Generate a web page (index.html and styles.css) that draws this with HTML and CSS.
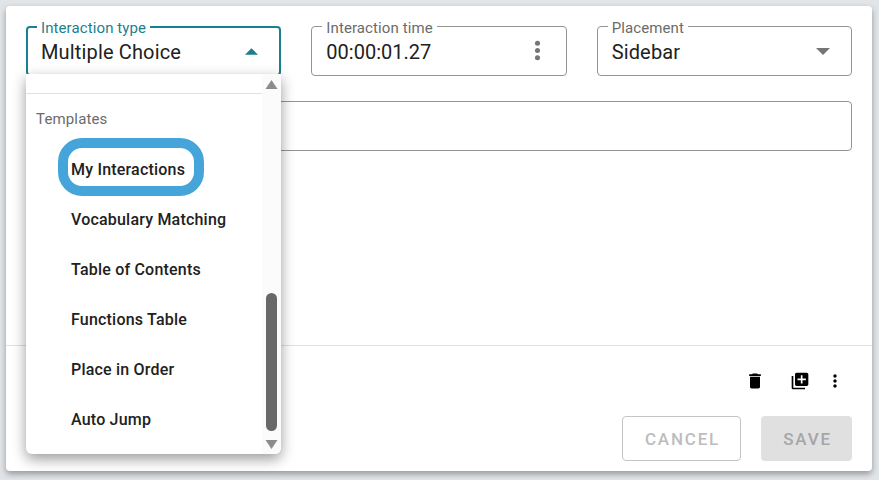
FILE: index.html
```html
<!DOCTYPE html>
<html lang="en">
<head>
<meta charset="utf-8">
<title>Interaction editor</title>
<link rel="stylesheet" href="styles.css">
</head>
<body>
<main class="card">
  <div class="form">
    <div class="row">
      <div class="field field-active">
        <span class="field-label">Interaction type</span>
        <span class="field-value">Multiple Choice</span>
        <svg class="arrow arrow-active" viewBox="0 0 12 6"><path d="M0 6L6 0l6 6z"/></svg>
      </div>
      <div class="field">
        <span class="field-label">Interaction time</span>
        <span class="field-value field-value-time">00:00:01.27</span>
        <svg class="dots" viewBox="0 0 6 20"><circle cx="3" cy="3" r="2.4"/><circle cx="3" cy="10" r="2.4"/><circle cx="3" cy="17" r="2.4"/></svg>
      </div>
      <div class="field">
        <span class="field-label">Placement</span>
        <span class="field-value">Sidebar</span>
        <svg class="arrow" viewBox="0 0 12 6"><path d="M0 0l6 6 6-6z"/></svg>
      </div>
    </div>
    <div class="field field-wide"></div>
  </div>
  <div class="footer">
    <div class="tools">
      <svg class="tool tool-trash" viewBox="0 0 24 24"><path d="M6 19c0 1.1.9 2 2 2h8c1.1 0 2-.9 2-2V7H6v12zM19 4h-3.500l-1-1h-5l-1 1H5v2h14V4z"/></svg>
      <svg class="tool tool-copy" viewBox="0 0 24 24"><path d="M4 6H2v14c0 1.100.9 2 2 2h14v-2H4V6zm16-4H8c-1.100 0-2 .9-2 2v12c0 1.100.9 2 2 2h12c1.100 0 2-.9 2-2V4c0-1.100-.9-2-2-2zm-1 9h-4v4h-2v-4H9V9h4V5h2v4h4v2z"/></svg>
      <svg class="tool tool-more" viewBox="0 0 24 24"><path d="M12 8c1.100 0 2-.9 2-2s-.9-2-2-2-2 .9-2 2 .9 2 2 2zm0 2c-1.100 0-2 .9-2 2s.9 2 2 2 2-.9 2-2-.9-2-2-2zm0 6c-1.100 0-2 .9-2 2s.9 2 2 2 2-.9 2-2-.9-2-2-2z"/></svg>
    </div>
    <div class="actions">
      <button class="btn btn-outline" disabled>CANCEL</button>
      <button class="btn btn-filled" disabled>SAVE</button>
    </div>
  </div>
</main>
<div class="menu">
  <div class="menu-list">
    <div class="menu-rule"></div>
    <div class="menu-heading">Templates</div>
    <div class="menu-item"><span class="ring">My Interactions</span></div>
    <div class="menu-item">Vocabulary Matching</div>
    <div class="menu-item">Table of Contents</div>
    <div class="menu-item">Functions Table</div>
    <div class="menu-item">Place in Order</div>
    <div class="menu-item">Auto Jump</div>
  </div>
  <div class="scrollbar">
    <svg class="scroll-arrow" viewBox="0 0 12 9"><path d="M6 0l6 9H0z"/></svg>
    <div class="scroll-track"><div class="scroll-thumb"></div></div>
    <svg class="scroll-arrow" viewBox="0 0 12 9"><path d="M0 0h12L6 9z"/></svg>
  </div>
</div>
</body>
</html>
```

FILE: styles.css
```css
* { box-sizing: border-box; }
html, body { margin: 0; height: 100%; }
body {
  background: #e2e5e8;
  padding: 6px 7px 9px 6px;
  font-family: Roboto, "Liberation Sans", sans-serif;
  color: #212121;
  overflow: hidden;
}
.card {
  height: 465px;
  background: #fff;
  border-radius: 4px;
  box-shadow: 0 3px 6px rgba(0,0,0,.35);
  display: flex;
  flex-direction: column;
  justify-content: space-between;
}
.form {
  padding: 20px 20px 0;
  display: flex;
  flex-direction: column;
  gap: 25px;
}
.row { display: flex; gap: 30px; }
.field {
  position: relative;
  flex: 1;
  height: 50px;
  border: 1px solid #949494;
  border-radius: 4px;
  display: flex;
  align-items: center;
  justify-content: space-between;
  padding: 0 21px 0 14px;
}
.field-active { border: 2px solid #1a7f8e; padding: 0 20px 0 13px; }
.field-wide { flex: none; height: 50px; }
.field-label {
  position: absolute;
  top: -6px;
  left: 10px;
  padding: 0 4px;
  background: #fff;
  font-size: 15px;
  letter-spacing: .1px;
  line-height: 15px;
  color: #6b6b6b;
}
.field-active .field-label { left: 9px; top: -7px; color: #1a7f8e; }
.field-value {
  font-size: 20px;
  letter-spacing: .15px;
  line-height: 24px;
  color: #212121;
  margin-top: 2px;
}
.field-value-time { letter-spacing: 0; }
.arrow { width: 14px; height: 7px; fill: #757575; }
.arrow-active { fill: #1a7f8e; width: 13px; margin-right: 1px; }
.dots { width: 7px; height: 21px; fill: #757575; margin-right: 4px; margin-bottom: 1px; }
.footer {
  border-top: 1px solid #e0e0e0;
  height: 126px;
  padding: 0 20px 10px;
  display: flex;
  flex-direction: column;
  justify-content: flex-end;
}
.tools {
  display: flex;
  justify-content: flex-end;
  align-items: center;
  margin-bottom: 25px;
  padding-right: 7px;
}
.tool { width: 20px; height: 20px; fill: #000; }
.tool-copy { margin: 0 15px 0 25px; }
.actions { display: flex; justify-content: flex-end; gap: 20px; }
.btn {
  height: 45px;
  border-radius: 4px;
  padding: 0 0 0 2px;
  font-family: Roboto, "Liberation Sans", sans-serif;
  font-size: 17px;
  font-weight: 500;
  letter-spacing: 1.8px;
}
.btn-outline {
  width: 119px;
  background: #fff;
  border: 1px solid #c4c4c4;
  color: #bdbdbd;
}
.btn-filled {
  width: 91px;
  background: #e0e0e0;
  border: 0;
  color: #a6a6a6;
}
.menu {
  position: absolute;
  left: 26px;
  top: 74px;
  width: 255px;
  height: 380px;
  background: #fff;
  border-radius: 0 0 6px 6px;
  box-shadow: 0 5px 14px rgba(0,0,0,.4);
  display: flex;
  overflow: hidden;
}
.menu-list { flex: 1; padding-top: 19px; }
.menu-rule { height: 1px; background: #e0e0e0; }
.menu-heading {
  font-size: 15px;
  letter-spacing: .15px;
  line-height: 20px;
  color: #6b6b6b;
  padding: 15px 0 0 10px;
  margin-bottom: 15px;
}
.menu-item {
  height: 50px;
  display: flex;
  align-items: center;
  padding-left: 45px;
  font-size: 16px;
  letter-spacing: .2px;
  font-weight: 500;
  color: #212121;
}
.ring {
  border: 10px solid #45a5da;
  border-radius: 24px;
  background: #fff;
  height: 58px;
  display: flex;
  align-items: center;
  padding: 4px 9px 0 3px;
  margin: -4px 0 0 -13px;
}
.scrollbar {
  width: 19px;
  background: #fbfbfb;
  display: flex;
  flex-direction: column;
  align-items: center;
  padding: 6px 0 5px;
}
.scroll-arrow { width: 13px; height: 9px; fill: #8c8c8c; flex: none; }
.scroll-track { flex: 1; display: flex; flex-direction: column; justify-content: flex-end; padding-bottom: 9px; }
.scroll-thumb { width: 11px; height: 138px; background: #686868; border-radius: 6px; }
```
